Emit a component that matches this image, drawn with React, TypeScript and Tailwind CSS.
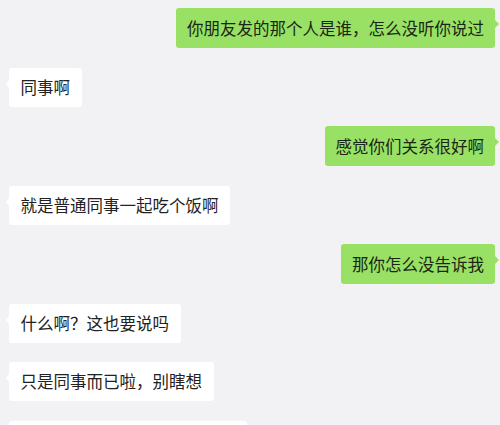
import React from "react";

type Msg = { me: boolean; text: string };

const msgs: Msg[] = [
  { me: true, text: "你朋友发的那个人是谁，怎么没听你说过" },
  { me: false, text: "同事啊" },
  { me: true, text: "感觉你们关系很好啊" },
  { me: false, text: "就是普通同事一起吃个饭啊" },
  { me: true, text: "那你怎么没告诉我" },
  { me: false, text: "什么啊？这也要说吗" },
  { me: false, text: "只是同事而已啦，别瞎想" },
  { me: false, text: "我们也就是普通同事关系而已" },
];

function Bubble({ m }: { m: Msg }) {
  if (m.me) {
    return (
      <div className="flex justify-end pr-[5px]">
        <div className="relative h-[40px] flex items-center rounded-[3px] bg-[#98e165] px-[11px] text-[#1b2614]">
          {m.text}
          <span className="absolute right-[-4px] top-[12px] h-0 w-0 border-y-[4px] border-l-[4px] border-y-transparent border-l-[#98e165]" />
        </div>
      </div>
    );
  }
  return (
    <div className="flex justify-start pl-[9px]">
      <div className="relative h-[39px] flex items-center rounded-[3px] bg-white px-[11.5px] text-[#222]">
        {m.text}
        <span className="absolute left-[-3px] top-[12px] h-0 w-0 border-y-[4px] border-r-[3px] border-y-transparent border-r-white" />
      </div>
    </div>
  );
}

export default function App() {
  return (
    <div
      className="w-[500px] h-[425px] overflow-hidden bg-[#f2f1f3] pt-[8px] flex flex-col gap-[19.5px] text-[16.5px] leading-none"
      style={{ fontFamily: '"Noto Sans CJK SC", "Noto Sans", sans-serif' }}
    >
      {msgs.map((m, i) => (
        <Bubble key={i} m={m} />
      ))}
    </div>
  );
}
